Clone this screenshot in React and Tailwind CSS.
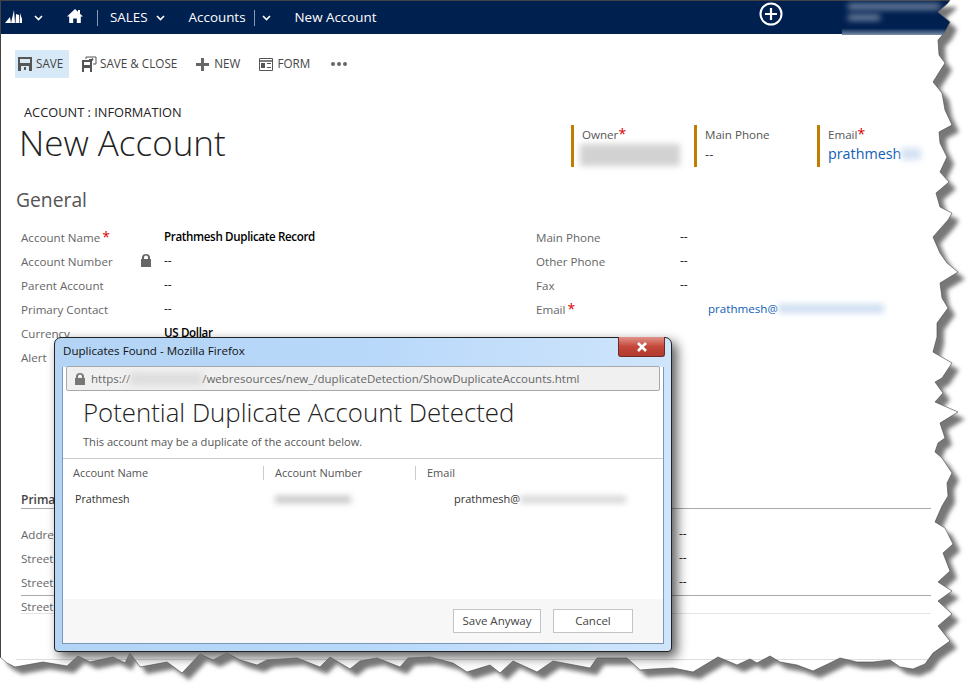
const TEAR = "0,657 7,663 15,667 43,662 67,666 78,656 90,662 113,657 125,663 130,653 140,667 167,662 182,673 200,654 213,660 227,653 240,660 257,665 267,660 297,658 320,667 330,657 350,669 360,661 377,658 400,667 408,658 430,657 453,663 467,672 490,665 500,673 513,661 537,672 553,661 590,668 597,658 627,658 640,670 653,669 673,668 693,672 718,657 737,665 750,659 757,663 770,656 780,662 797,665 813,671 830,663 840,658 857,662 873,662 890,660 900,667 913,669 925,664 933,653 950,641 938,626 952,614 938,601 952,591 938,582 950,571 943,553 953,544 945,528 935,522 942,506 948,496 947,483 952,473 942,458 935,452 938,443 945,438 940,423 958,412 935,402 943,393 935,382 942,378 952,363 933,352 937,337 937,323 948,308 942,298 940,283 958,272 947,263 940,253 933,237 940,229 948,220 952,213 940,207 936,193 949,182 940,172 947,157 940,143 939,132 952,125 945,110 942,93 933,82 945,63 939,55 938,40 945,32 950,22 938,12 948,3 950,0";

const font = { fontFamily: '"Open Sans", "Noto Sans", sans-serif' };

function TornEdge() {
  const page = `0,0 ${TEAR}`;
  const outside = `${TEAR} 971,0 971,686 0,686`;
  return (
    <svg className="absolute left-0 top-0 z-20 pointer-events-none" width="971" height="686">
      <defs>
        <clipPath id="outside">
          <polygon points={outside} />
        </clipPath>
        <filter id="soft" x="-5%" y="-5%" width="110%" height="110%">
          <feGaussianBlur stdDeviation="2" />
        </filter>
      </defs>
      <polygon points={outside} fill="#ffffff" />
      <g clipPath="url(#outside)">
        <polygon points={page} transform="translate(7 7)" fill="#777777" filter="url(#soft)" />
      </g>
      <polyline points={TEAR} fill="none" stroke="#444444" strokeWidth="0.6" />
    </svg>
  );
}

function Chevron({ className }) {
  return (
    <svg className={className} width="9" height="6" viewBox="0 0 9 6">
      <path d="M1 1l3.5 3.5L8 1" fill="none" stroke="#fff" strokeWidth="1.6" />
    </svg>
  );
}

function Blur({ className }) {
  return <span className={"inline-block blur-[3px] " + className} />;
}

function NavBar() {
  return (
    <div className="h-[33px] bg-[#002050] flex items-center text-white text-[13.4px] relative">
      <svg className="ml-[5px] mb-[3px]" width="17" height="14" viewBox="0 0 17 14">
        <path d="M0 14L5 8l1 6zM6 14L9 1l1 13zM10.500 14L11 5l3 1v8zM14.500 14L15 4l2 6v4z" fill="#fff" />
      </svg>
      <Chevron className="ml-[12px]" />
      <svg className="ml-[24px] mb-[4px]" width="16" height="14" viewBox="0 0 16 14">
        <path d="M8 0L0 7.5h2.2V14h4V9.5h3.6V14h4V7.5H16L13 4.7V1h-2v1.8z" fill="#fff" />
      </svg>
      <div className="ml-[14px] w-px h-[16px] bg-[#8a9ab5]" />
      <span className="ml-[12px]">SALES</span>
      <Chevron className="ml-[8px]" />
      <span className="ml-[24px]">Accounts</span>
      <div className="ml-[8px] w-px h-[16px] bg-[#8a9ab5]" />
      <Chevron className="ml-[7px]" />
      <span className="ml-[24px]">New Account</span>
      <svg className="ml-auto mr-[188px] mb-[8px]" width="24" height="24" viewBox="0 0 24 24">
        <circle cx="12" cy="12" r="10.5" fill="none" stroke="#fff" strokeWidth="2" />
        <path d="M12 6v12M6 12h12" stroke="#fff" strokeWidth="2.2" />
      </svg>
      <div className="absolute left-[842px] top-0 w-[110px] h-[34px] flex flex-col gap-[6px] pt-[3px] pl-[6px] bg-gradient-to-b from-[#002050] from-80% to-[#7f8fa8]">
        <Blur className="w-[92px] h-[5px] bg-[#8b9ab3]" />
        <Blur className="w-[32px] h-[5px] bg-[#8b9ab3]" />
      </div>
    </div>
  );
}

function CommandBar() {
  const text = "text-[11.7px] text-[#444444]";
  return (
    <div className="flex items-center h-[28px] mt-[16px] ml-[15px]">
      <div className="flex items-center h-[28px] w-[54px] bg-[#d7e9f7] pl-[3px] gap-[4px]">
        <svg width="14" height="14" viewBox="0 0 14 14">
          <path fillRule="evenodd" d="M0 0h14v14H0zM2 2v4h10V2zM3 9v5h8V9z" fill="#555" />
          <path d="M6 10h2v3H6z" fill="#555" />
        </svg>
        <span className={text}>SAVE</span>
      </div>
      <svg className="ml-[12px]" width="16" height="16" viewBox="0 0 16 16">
        <path fillRule="evenodd" d="M1 4h10v12H1zM3 12v4h6v-4zM3 6v3h6V6z" fill="#555" />
        <path d="M5 3V1h10v7h-3M8 3.5h4M10.5 2l1.8 1.5L10.500 5" fill="none" stroke="#555" />
      </svg>
      <span className={text + " ml-[3px]"}>SAVE &amp; CLOSE</span>
      <svg className="ml-[19px]" width="13" height="13" viewBox="0 0 13 13">
        <path d="M5 0h3v5h5v3H8v5H5V8H0V5h5z" fill="#666" />
      </svg>
      <span className={text + " ml-[5px]"}>NEW</span>
      <svg className="ml-[19px]" width="14" height="13" viewBox="0 0 14 13">
        <path d="M.5.5h13v12H.5z" fill="none" stroke="#555" />
        <path d="M.5 3h13" stroke="#555" strokeWidth="1.500" />
        <path d="M2 5h4v5H2zM8 5h4v1H8zM8 9h4v1H8z" fill="#555" />
      </svg>
      <span className={text + " ml-[4px]"}>FORM</span>
      <div className="ml-[21px] flex gap-[2px]">
        <span className="w-1 h-1 rounded-full bg-[#666]" />
        <span className="w-1 h-1 rounded-full bg-[#666]" />
        <span className="w-1 h-1 rounded-full bg-[#666]" />
      </div>
    </div>
  );
}

function Tile({ label, required, children, width }) {
  return (
    <div className={"border-l-[3px] border-[#c17d00] h-[42px] pl-[8px] " + width}>
      <div className="text-[11.6px] leading-[18px] text-[#555] mt-px">
        {label}
        {required && <span className="text-[#d00] text-[14px] leading-[10px]">*</span>}
      </div>
      {children}
    </div>
  );
}

function Header() {
  return (
    <div className="flex mt-[26px]">
      <div className="ml-[20px] w-[551px]">
        <div className="ml-[4px] text-[12.8px] leading-[16px] text-[#222]">ACCOUNT : INFORMATION</div>
        <div className="text-[35px] leading-[46px] font-light text-[#222] -ml-[1px]">New Account</div>
      </div>
      <div className="flex mt-[21px]">
        <Tile label="Owner" required width="w-[123px]">
          <Blur className="block w-[100px] h-[22px] bg-[#d2d2d2] -ml-[2px]" />
        </Tile>
        <Tile label="Main Phone" width="w-[123px]">
          <div className="text-[13px] leading-[18px] text-[#444] mt-[1px]">--</div>
        </Tile>
        <Tile label="Email" required width="w-[120px]">
          <div className="text-[14.3px] leading-[20px] text-[#1160b7] flex items-center">
            prathmesh
            <Blur className="w-[20px] h-[12px] bg-[#d5e2f2]" />
          </div>
        </Tile>
      </div>
    </div>
  );
}

function Row({ label, required, lock, children, labelWidth = "w-[143px]" }) {
  return (
    <div className="flex items-center h-[24px] text-[11.6px]">
      <div className={"relative shrink-0 mt-[1px] text-[#666] " + labelWidth}>
        {label}
        {required && <span className="text-[#d00] text-[14px] leading-[10px] ml-[2px]">*</span>}
        {lock && (
          <svg className="absolute right-[13px] top-[1px]" width="10" height="13" viewBox="0 0 10 13">
            <path fillRule="evenodd" d="M1 5V3.500a4 3.500 0 0 1 8 0V5h1v8H0V5zM3 5h4V3.500a2 2 0 0 0-4 0z" fill="#666" />
          </svg>
        )}
      </div>
      <div className="text-[#222] text-[12px]">{children}</div>
    </div>
  );
}

function Strong({ children }) {
  return <b className="font-semibold text-black text-[11.6px] tracking-[-0.03em]">{children}</b>;
}

function GeneralSection() {
  return (
    <div className="mt-[19px]">
      <div className="ml-[16px] text-[19.3px] leading-[28px] text-[#555]">General</div>
      <div className="flex mt-[11px]">
        <div className="ml-[21px] w-[515px]">
          <Row label="Account Name" required><Strong>Prathmesh Duplicate Record</Strong></Row>
          <Row label="Account Number" lock>--</Row>
          <Row label="Parent Account">--</Row>
          <Row label="Primary Contact">--</Row>
          <Row label="Currency"><Strong>US Dollar</Strong></Row>
          <Row label="Alert" />
        </div>
        <div>
          <Row label="Main Phone" labelWidth="w-[144px]">--</Row>
          <Row label="Other Phone" labelWidth="w-[144px]">--</Row>
          <Row label="Fax" labelWidth="w-[144px]">--</Row>
          <Row label="Email" required labelWidth="w-[172px]">
            <span className="flex items-center text-[#1160b7] text-[11.6px]">
              prathmesh@
              <Blur className="w-[106px] h-[9px] bg-[#cfdef0]" />
            </span>
          </Row>
        </div>
      </div>
    </div>
  );
}

function AddressSection() {
  return (
    <div className="mt-[123px]">
      <div className="ml-[21px] mr-[40px] border-b border-[#aaa] h-[17px] text-[12px] font-semibold text-[#444] leading-[16px]">Primary</div>
      <div className="flex mt-[13px]">
        <div className="ml-[21px] w-[658px]">
          <Row label="Address" />
          <Row label="Street 1" />
          <Row label="Street 2" />
          <Row label="Street 3" />
        </div>
        <div>
          <div className="h-[24px] text-[12px] leading-[24px] text-[#222]">--</div>
          <div className="h-[24px] text-[12px] leading-[24px] text-[#222]">--</div>
          <div className="h-[24px] text-[12px] leading-[24px] text-[#222]">--</div>
        </div>
      </div>
      <div className="ml-[21px] mr-[40px] border-b border-[#aaa] -mt-[23px]" />
      <div className="ml-[21px] mr-[40px] border-b border-[#e4e4e4] mt-[17px]" />
      <div className="ml-[16px] mr-[30px] border-b border-[#ddd] mt-[45px]" />
    </div>
  );
}

function DuplicateDialog() {
  return (
    <div className="absolute z-10 left-[54px] top-[337px] w-[618px] h-[315px] rounded-t-[7px] rounded-b-[4px] border border-[#222] bg-[#b4d6f9] bg-gradient-to-r from-[#b4d4f6] via-[#b8d8fa] to-[#cfe5fb] shadow-[5px_5px_12px_rgba(0,0,0,0.65)] flex flex-col px-[7px] pb-[7px]">
      <div className="h-[29px] flex items-center ml-[1px] pb-[4px] text-[11.6px] text-[#111] relative">
        Duplicates Found - Mozilla Firefox
        <div className="absolute -right-[1px] top-[-1px] w-[47px] h-[20px] rounded-b-[3px] border border-[#6d2a24] border-t-0 bg-gradient-to-b from-[#e0938a] via-[#c4473b] to-[#b23a2e] flex items-center justify-center">
          <svg width="12" height="10" viewBox="0 0 12 10">
            <path d="M2 1l8 8M10 1l-8 8" stroke="#fff" strokeWidth="2.600" />
          </svg>
        </div>
      </div>
      <div className="flex-1 border border-[#7a97b8] border-t-0 flex flex-col bg-white">
        <div className="h-[25px] bg-[#f0f0f0] border border-[#a8a8a8] rounded-[2px] flex items-center pl-[8px] text-[11.5px] text-[#666] -mt-px mx-[3px]">
          <svg width="10" height="12" viewBox="0 0 10 12">
            <path fillRule="evenodd" d="M1 5V3.500a4 3.500 0 0 1 8 0V5h1v7H0V5zM3 5h4V3.500a2 2 0 0 0-4 0z" fill="#777" />
          </svg>
          <span className="ml-[6px]">https://</span>
          <Blur className="w-[72px] h-[12px] bg-[#dddddd]" />
          <span>/webresources/new_/duplicateDetection/ShowDuplicateAccounts.html</span>
        </div>
        <div className="ml-[20px] mt-[4px] text-[25.8px] leading-[34px] font-light text-[#222]">Potential Duplicate Account Detected</div>
        <div className="ml-[20px] mt-[5px] text-[11.1px] leading-[16px] text-[#555]">This account may be a duplicate of the account below.</div>
        <div className="border-t border-[#ccc] mt-[8px] flex h-[28px] items-center text-[11px] text-[#555]">
          <div className="w-[201px] pl-[10px] border-r border-[#ccc] h-[14px] leading-[14px]">Account Name</div>
          <div className="w-[152px] pl-[11px] border-r border-[#ccc] h-[14px] leading-[14px]">Account Number</div>
          <div className="pl-[11px] leading-[14px]">Email</div>
        </div>
        <div className="flex items-center h-[26px] text-[11px] text-[#333] flex-none">
          <div className="w-[212px] pl-[12px] text-[10.7px]">Prathmesh</div>
          <div className="w-[179px]"><Blur className="block w-[76px] h-[7px] bg-[#c4c4c4]" /></div>
          <div className="flex items-center">
            prathmesh@
            <Blur className="w-[106px] h-[7px] bg-[#d4d4d4]" />
          </div>
        </div>
        <div className="flex-1" />
        <div className="h-[44px] bg-[#f7f7f7] flex justify-end items-start pt-[10px] pr-[30px] gap-[12px] text-[11.5px] text-[#444]">
          <div className="w-[88px] h-[24px] bg-white border border-[#c4c4c4] flex items-center justify-center">Save Anyway</div>
          <div className="w-[80px] h-[24px] bg-white border border-[#c4c4c4] flex items-center justify-center">Cancel</div>
        </div>
      </div>
    </div>
  );
}

export default function App() {
  return (
    <div className="relative w-[971px] h-[686px] overflow-hidden bg-white" style={font}>
      <div className="h-px bg-[#444]" />
      <NavBar />
      <CommandBar />
      <Header />
      <GeneralSection />
      <AddressSection />
      <div className="absolute left-0 top-0 w-px h-full bg-[#444]" />
      <DuplicateDialog />
      <TornEdge />
    </div>
  );
}
